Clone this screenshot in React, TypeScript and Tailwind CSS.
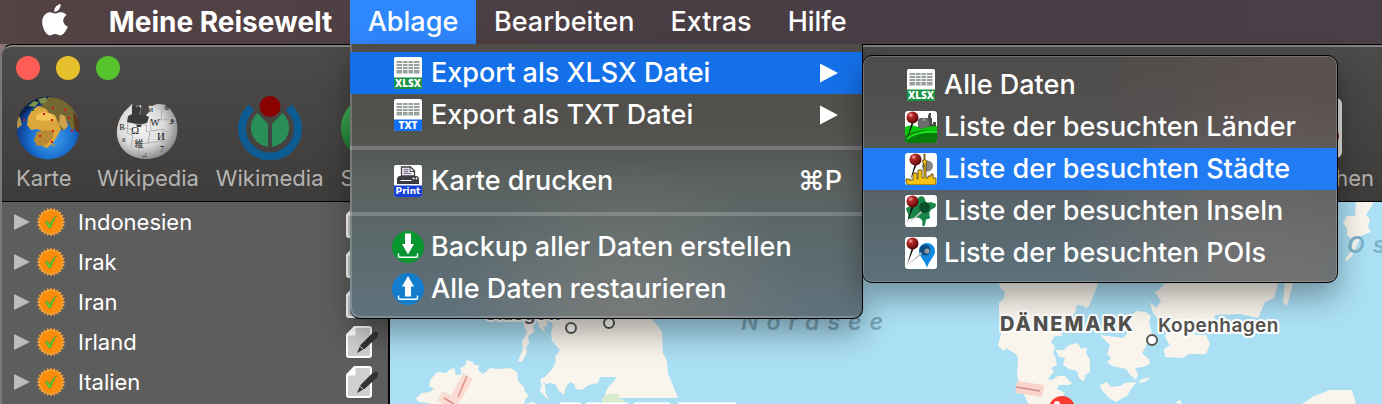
/**
 * Meine Reisewelt
 *
 * Menu bar with the opened "Ablage" menu above the main travel window.
 */

import React from 'react';

type MenuEntry = {
  label: string;
  icon: React.ReactNode;
  shortcut?: string;
  submenu?: boolean;
  active?: boolean;
};

const countries = ['Indonesien', 'Irak', 'Iran', 'Irland', 'Italien'];

/* ---------- Icons ---------- */

function AppleLogo() {
  return (
    <svg viewBox="0 0 26 32" className="h-8 w-[26px]" fill="#fff" aria-hidden="true">
      <path d="M18.6 0c.3 2.200-.6 4.200-1.900 5.700-1.200 1.400-2.900 2.300-4.400 2.100-.3-2 .7-4.100 1.900-5.500C15.400 1 17.200.2 18.600 0z" />
      <path d="M13.200 9.600c1.200 0 3-1.500 5.600-1.400 2.500.1 4.500 1.200 5.700 3-4.800 3-4.200 9.200 1.300 11.400-1 3-4.200 8.700-7.300 8.800-2 0-2.900-1.300-5.300-1.300s-3.400 1.300-5.300 1.300C4.500 31.300.3 24.800.2 18.300.1 12.300 4 8.500 7.900 8.300c2.300 0 4 1.300 5.300 1.300z" />
    </svg>
  );
}

function SheetIcon({ label, color }: { label: string; color: string }) {
  return (
    <svg viewBox="0 0 32 32" className="size-8" aria-hidden="true">
      <rect x="2" y="0" width="28" height="32" rx="2" fill="#fff" />
      <rect x="4.500" y="4" width="23" height="12.500" fill="#9aa09d" />
      <path d="M4 6.500h24M4 9.500h24M4 12.500h24M10.500 3v14M16 3v14M21.500 3v14" stroke="#f4f4f4" strokeWidth="1" />
      <path d="M2 20.500h28V30a2 2 0 0 1-2 2H4a2 2 0 0 1-2-2z" fill={color} />
      <text x="16" y="29.500" textAnchor="middle" fontFamily="Open Sans, sans-serif" fontWeight="800" fontSize="10" fill="#fff">
        {label}
      </text>
    </svg>
  );
}

function PrintIcon() {
  return (
    <svg viewBox="0 0 32 32" className="size-8" aria-hidden="true">
      <rect x="2" y="0" width="28" height="32" rx="2" fill="#fff" />
      <path d="M5 19v-5c0-2 1.500-3 3-3h16c2 0 3 1.500 3 3v5z" fill="#3c3b40" />
      <path d="M9.500 11V2h9l4 4v5z" fill="#fff" stroke="#3c3b40" strokeWidth="1.300" />
      <path d="M18 2v4.500h4.500" fill="none" stroke="#3c3b40" />
      <path d="M11.500 4.500h5M11.500 6.500h5M11.500 8.500h8" stroke="#8b7ca0" strokeWidth="1.300" />
      <path d="M8.500 15.500h11" stroke="#fff" strokeWidth="1" />
      <circle cx="21.500" cy="13.500" r="1" fill="#fff" />
      <circle cx="24.500" cy="13.500" r="1" fill="#fff" />
      <path d="M2 20.500h28V30a2 2 0 0 1-2 2H4a2 2 0 0 1-2-2z" fill="#1540d8" />
      <text x="16" y="29" textAnchor="middle" fontFamily="DejaVu Sans, sans-serif" fontWeight="700" fontSize="9" fill="#fff">
        Print
      </text>
    </svg>
  );
}

function TransferIcon({ up = false }: { up?: boolean }) {
  return (
    <svg viewBox="0 0 32 32" className="size-8" aria-hidden="true">
      <circle cx="16" cy="16" r="16" fill={up ? '#137dcd' : '#07962f'} />
      {up ? (
        <path d="M16 3l6 10.500h-3V23.500h-6V13.500h-3z" fill="#fff" />
      ) : (
        <path d="M13 2.500h6V13h3l-6 10.500L10 13h3z" fill="#fff" />
      )}
      <path d="M6.500 22.500v2.800a1 1 0 0 0 1 1h17a1 1 0 0 0 1-1v-2.800" fill="none" stroke="#fff" strokeWidth="1.500" />
    </svg>
  );
}

function Pin({ x = 7.5 }: { x?: number }) {
  return (
    <g>
      <path d={`M${x + 1} 12L${x - 5.5} 28L${x - 1} 12z`} fill="#111" />
      <circle cx={x} cy="6.500" r="6" fill="url(#pinShine)" />
    </g>
  );
}

function PinTile({ kind }: { kind: 'land' | 'city' | 'island' | 'poi' }) {
  return (
    <svg viewBox="0 0 32 32" className="size-8 rounded-[3px] bg-white" aria-hidden="true">
      <defs>
        <radialGradient id="pinShine" cx="0.35" cy="0.3" r="0.7">
          <stop offset="0" stopColor="#f3b0ac" />
          <stop offset="0.3" stopColor="#b52a26" />
          <stop offset="1" stopColor="#5c0709" />
        </radialGradient>
      </defs>
      {kind === 'land' && (
        <>
          <path d="M13 18V9l2-2h3v3h2V7h3V5l1-3h2v5h1v6h1v-2h3v9H13z" fill="#4b4b4d" />
          <circle cx="18.500" cy="12.500" r="6" fill="#777" opacity="0.75" />
          <path d="M0 16c7-3 12-1 16 2 5-2 10-3 16-3v17H0z" fill="#09c60a" />
          <path d="M0 25c9-6 19-6 32-5v12H0z" fill="#087c08" />
          <path d="M2 28c8-7 18-8 30-7" fill="none" stroke="#19e41b" strokeWidth="2" />
          <Pin />
        </>
      )}
      {kind === 'city' && (
        <>
          <circle cx="22.500" cy="13" r="5.500" fill="#858585" />
          <path
            d="M1 26h3v1h4v-7h4v6h1v-9h4v8h2V11l-2-3 2-1V1h1v6l2 1-1 3v14h2v-2h3v-2h2v4h3v6l-2 1H3l-2-3z"
            fill="#f8c414"
            stroke="#473705"
            strokeWidth="0.8"
          />
          <Pin x={10.5} />
        </>
      )}
      {kind === 'island' && (
        <>
          <path d="M1 13l5-2 7-8c2-3 7-2 7 2 1 3 3 3 6 2l5 2c0 3-1 4-4 5-3 2-3 5-2 8 0 3-3 1-4 3-1 4-1 7-3 6-2 0 1-4-2-7-3-2-7-2-11 0-4 1 0-5-3-7z" fill="#178648" />
          <circle cx="19.500" cy="12.500" r="5.500" fill="#0b4f2a" />
          <path d="M2 29l14-13 1 2z" fill="#bbb" />
          <Pin />
        </>
      )}
      {kind === 'poi' && (
        <>
          <path d="M22 31c-2-8-8-11-8-17a8 8 0 0 1 16 0c0 6-6 9-8 17z" fill="#118ae4" />
          <circle cx="20" cy="13" r="5.500" fill="#0d4f83" />
          <circle cx="22" cy="14" r="2.500" fill="#9a9a9a" />
          <path d="M2 29l14-14 1 2z" fill="#bbb" />
          <Pin />
        </>
      )}
    </svg>
  );
}

function GlobeIcon() {
  const dots = [
    [36, 11], [27, 17], [35, 23], [48, 13], [52, 21], [7, 23], [36, 34], [23, 39], [35, 45], [55, 34], [16, 13],
  ];
  return (
    <svg viewBox="0 0 64 64" className="size-16" aria-hidden="true">
      <defs>
        <radialGradient id="sea" cx="0.55" cy="0.65" r="0.6">
          <stop offset="0" stopColor="#45a5ee" />
          <stop offset="0.55" stopColor="#1a70cf" />
          <stop offset="0.9" stopColor="#0e3c92" />
          <stop offset="1" stopColor="#0a2048" />
        </radialGradient>
        <clipPath id="globeClip">
          <circle cx="32" cy="32" r="31.500" />
        </clipPath>
      </defs>
      <circle cx="32" cy="32" r="31.500" fill="url(#sea)" />
      <g clipPath="url(#globeClip)">
        <path d="M16 14l6-4 7 1 5 3 6 1 3 5 2 6 4 1-4 6-3 6-5 8-6 5-5-2 1-8-1-7-5-2-6 1-4-5 1-8z" fill="#dba63b" />
        <path d="M21 36l8-2 9 1-1 7-7 7-9 1-3-6z" fill="#b98935" />
        <path d="M27 5l6-4 12 1 10 8 7 10-2 12-4 2-4-8-4-2 2 8-4 3-4-9-3-7-6-2-3-4-5-2z" fill="#74672f" />
        <path d="M44 18l5 2 3 10-4 4-5-6z" fill="#cfa250" />
        <path d="M12 10l6-5 5 1-4 5zM22 3l8-2 1 5-6 2z" fill="#77904b" />
        <path d="M57 16l7 8v14l-5-4z" fill="#5a3520" />
        <path d="M20 19l7-3 9 2 4 5-9 2-11-1z" fill="#f0c456" />
        <path d="M0 19l4 2 2 8-5 4zM35 48l5 1-2 2z" fill="#a8934c" />
      </g>
      {dots.map(([x, y], i) => (
        <rect key={i} x={x} y={y} width="2" height="2" fill={i === 10 ? '#166b24' : '#d8151b'} />
      ))}
    </svg>
  );
}

function PuzzleGlobeIcon() {
  return (
    <svg viewBox="0 0 64 64" className="size-16" aria-hidden="true">
      <defs>
        <radialGradient id="paper" cx="0.4" cy="0.4" r="0.62">
          <stop offset="0" stopColor="#f7f7f7" />
          <stop offset="0.6" stopColor="#dcdcdc" />
          <stop offset="1" stopColor="#8d8d8d" />
        </radialGradient>
      </defs>
      <path
        d="M8 16l8-8c2 3 3 4 5 2 3-2 5-1 4 2-1 3 0 5-2 7l7 1c1-3 4-3 3-6-1-4 0-5 3-4l5-2c7 0 11 1 14 6 14 18 5 48-24 49C2 63-7 36 8 16z"
        fill="url(#paper)"
      />
      <path d="M16 9l5 2 2-2 2 4-2 6 6 0 4 2-2 6-5 1-1 3-4 0-1-3-9-2 1-6 4-2z" fill="#3a3a3a" />
      <path
        d="M4 33c5-3 8 2 14-1M12 26l-1 11 6 3-2 11M18 28l13 1-1 6 4 1-2 11-9 1-1 10M34 24l1 11 12-2 4 3M46 12l-1 12-10 1M47 33l-1 12-14 2M46 45l9 1M46 24l14-2"
        fill="none"
        stroke="#aaa"
        strokeWidth="0.9"
      />
      <g fill="#222" fontFamily="Liberation Serif, serif" fontSize="11" textAnchor="middle">
        <text x="19" y="38">Ω</text>
        <text x="39" y="30" fontSize="10">W</text>
        <text x="45" y="44">И</text>
        <text x="46" y="56" fontSize="9">7</text>
        <text x="35" y="16" fontSize="8">и</text>
        <text x="51" y="14" fontSize="7">⊕</text>
        <text x="56" y="26" fontSize="9">و</text>
        <text x="23" y="51" fontSize="9" fontFamily="Noto Sans CJK JP, sans-serif">維</text>
        <text x="6" y="34" fontSize="8">B</text>
        <text x="8" y="46" fontSize="6">R</text>
        <text x="28" y="61" fontSize="7">ය</text>
      </g>
    </svg>
  );
}

function WikimediaIcon() {
  return (
    <svg viewBox="0 0 64 64" className="size-16" aria-hidden="true">
      <path d="M13.500 11.500a28 28 0 1 0 37 0" fill="none" stroke="#0c5b93" strokeWidth="8" />
      <circle cx="32" cy="10.500" r="10.500" fill="#8b0000" />
      <path d="M19.500 17L30 28v23A19.500 19.500 0 0 1 19.500 17z" fill="#2a8e57" />
      <path d="M44.500 17L34 28v23A19.500 19.500 0 0 0 44.500 17z" fill="#2a8e57" />
    </svg>
  );
}

function BadgeIcon() {
  const teeth = 24;
  const points = Array.from({ length: teeth * 2 }, (_, i) => {
    const angle = (Math.PI * i) / teeth;
    const radius = i % 2 ? 12 : 14.5;
    return `${15 + radius * Math.sin(angle)},${15 - radius * Math.cos(angle)}`;
  }).join(' ');
  return (
    <svg viewBox="0 0 30 30" className="size-[30px]" aria-hidden="true">
      <polygon points={points} fill="#f9a233" />
      <circle cx="15" cy="15" r="11" fill="#fb8c0c" />
      <path d="M9.500 15l2-1 2.500 4c1-4 3-6.500 6.500-9-3 4-4 7.500-6 12h-1.500z" fill="#63d13c" stroke="#3d9b23" strokeWidth="0.6" />
    </svg>
  );
}

function EditIcon() {
  return (
    <svg viewBox="0 0 32 32" className="size-8" aria-hidden="true">
      <path d="M8.500 1H23a2 2 0 0 1 2 2v26a2 2 0 0 1-2 2H3a2 2 0 0 1-2-2V9z" fill="#cfcfcf" stroke="#fff" strokeWidth="2" />
      <path d="M9.500 1v8.500H1z" fill="#fff" />
      <path d="M11 27l3.500-8L26 7.500c2-2 4.500-2 5.500-1 1 1 1 3.500-1 5.500L19 22.500z" fill="#333" />
      <path d="M13 19.500l5.500 5" stroke="#cfcfcf" strokeWidth="1" />
    </svg>
  );
}

/* ---------- Menus ---------- */

const exportEntries: MenuEntry[] = [
  { label: 'Alle Daten', icon: <SheetIcon label="XLSX" color="#179242" /> },
  { label: 'Liste der besuchten Länder', icon: <PinTile kind="land" /> },
  { label: 'Liste der besuchten Städte', icon: <PinTile kind="city" />, active: true },
  { label: 'Liste der besuchten Inseln', icon: <PinTile kind="island" /> },
  { label: 'Liste der besuchten POIs', icon: <PinTile kind="poi" /> },
];

function MenuItem({ label, icon, shortcut, submenu, active }: MenuEntry) {
  return (
    <button
      type="button"
      role="menuitem"
      className={`flex h-[42px] w-full items-center gap-[7px] pr-5 pl-[42px] text-left text-[27px] leading-8 font-medium text-white ${
        active ? (submenu ? 'bg-[#1470e8]' : 'bg-[#217cf4]') : ''
      }`}
    >
      {icon}
      <span className="grow whitespace-nowrap">{label}</span>
      {shortcut && <span>{shortcut}</span>}
      {submenu && (
        <svg viewBox="0 0 18 20" className="mr-1 h-5 w-[18px]" aria-hidden="true">
          <path d="M0 0.500l18 9.500-18 9.500z" fill="#fff" />
        </svg>
      )}
    </button>
  );
}

function Separator() {
  return <div role="separator" className="my-2.5 h-1 bg-white/20" />;
}

function ExportSubmenu() {
  return (
    <div
      role="menu"
      aria-label="Export als XLSX Datei"
      className="absolute top-[3px] left-full w-[476px] rounded-[10px] border border-black bg-[#5b6164] bg-[radial-gradient(circle_at_85%_110%,#777270_0%,#77727000_45%),radial-gradient(circle_at_92%_15%,#5c5150_0%,#5c515000_40%),linear-gradient(to_bottom,#4e4c4a_0%,#535150_28%,#586266_60%,#5b717b_100%)] py-2 shadow-[0_14px_30px_rgba(0,0,0,0.35),inset_0_0_0_1px_rgba(255,255,255,0.2)]"
    >
      {exportEntries.map((entry) => (
        <MenuItem key={entry.label} {...entry} />
      ))}
    </div>
  );
}

function AblageMenu() {
  return (
    <div
      role="menu"
      aria-label="Ablage"
      className="absolute top-full left-0 z-10 w-[513px] rounded-b-[10px] border-r border-b border-black bg-[#5a6261] bg-[radial-gradient(circle_at_55%_110%,#7b7b76_0%,#7b7b7600_45%),linear-gradient(to_bottom,#504d49_0%,#52514d_30%,#5a615f_50%,#5c6a6d_75%,#5f727d_100%)] py-2 shadow-[0_14px_30px_rgba(0,0,0,0.35),inset_1px_-1px_0_1px_rgba(255,255,255,0.2)]"
    >
      <div className="relative">
        <MenuItem label="Export als XLSX Datei" icon={<SheetIcon label="XLSX" color="#179242" />} submenu active />
        <ExportSubmenu />
      </div>
      <MenuItem label="Export als TXT Datei" icon={<SheetIcon label="TXT" color="#116ef5" />} submenu />
      <Separator />
      <MenuItem label="Karte drucken" icon={<PrintIcon />} shortcut="⌘P" />
      <Separator />
      <MenuItem label="Backup aller Daten erstellen" icon={<TransferIcon />} />
      <MenuItem label="Alle Daten restaurieren" icon={<TransferIcon up />} />
    </div>
  );
}

function MenuBar() {
  return (
    <nav className="flex h-11 shrink-0 items-center bg-linear-to-r from-[#544244] via-[#493e44] to-[#4a3f47] text-[27px] leading-8 font-medium whitespace-nowrap text-white">
      <button type="button" aria-label="Apple" className="flex w-[91px] justify-center pb-1 pl-[19px]">
        <AppleLogo />
      </button>
      <button type="button" className="h-11 w-[259px] text-center text-[28px] font-bold">Meine Reisewelt</button>
      <div className="relative">
        <button type="button" aria-expanded="true" className="h-11 w-[126px] bg-[#2f87fd] text-center">Ablage</button>
        <AblageMenu />
      </div>
      <button type="button" className="h-11 px-[18px]">Bearbeiten</button>
      <button type="button" className="h-11 px-[18px]">Extras</button>
      <button type="button" className="h-11 px-[18px]">Hilfe</button>
    </nav>
  );
}

/* ---------- Window ---------- */

function ToolbarButton({ label, children }: { label: string; children: React.ReactNode }) {
  return (
    <button type="button" className="flex min-w-14 flex-col items-center gap-1 text-[22px] leading-7 text-[#b4b3b1]">
      {children}
      <span>{label}</span>
    </button>
  );
}

function Toolbar() {
  return (
    <header className="h-[157px] shrink-0 rounded-tl-[10px] border-t-2 border-b border-t-[#828180] border-b-black bg-linear-to-b from-[#4c4b49] to-[#3d3c3a]">
      <div className="flex gap-4 px-3.5 pt-[9px]">
        <button type="button" aria-label="Schließen" className="size-6 rounded-full bg-[#ff5c55]" />
        <button type="button" aria-label="Minimieren" className="size-6 rounded-full bg-[#e6bf2c]" />
        <button type="button" aria-label="Zoomen" className="size-6 rounded-full bg-[#56c32d]" />
      </div>
      <div className="flex justify-between pt-4 pr-2 pl-3.5">
        <div className="flex gap-[17px]">
          <button type="button" className="flex flex-col items-start gap-1 text-[22px] leading-7 text-[#b4b3b1]">
            <GlobeIcon />
            <span>Karte</span>
          </button>
          <ToolbarButton label="Wikipedia"><PuzzleGlobeIcon /></ToolbarButton>
          <ToolbarButton label="Wikimedia"><WikimediaIcon /></ToolbarButton>
          <button type="button" className="flex flex-col gap-1 text-left text-[22px] leading-7 text-[#b4b3b1]">
            <span className="size-16 rounded-full bg-linear-to-b from-[#4cc25f] to-[#126f2a]" />
            <span>S</span>
          </button>
        </div>
        <button type="button" className="flex flex-col items-end gap-1 text-[22px] leading-7 text-[#b4b3b1]">
          <svg viewBox="0 0 64 64" className="mr-8 size-16" aria-hidden="true">
            <rect x="0" y="2" width="64" height="60" rx="6" fill="#dededc" />
            <circle cx="51" cy="40" r="10" fill="#8c1210" />
          </svg>
          <span>hen</span>
        </button>
      </div>
    </header>
  );
}

function Sidebar() {
  return (
    <aside className="w-[388px] shrink-0 border-r-2 border-black bg-[#5d5d5d]">
      <ul>
        {countries.map((country) => (
          <li key={country} className="flex h-10 items-center pr-2.5 pl-3 text-[22px] leading-7 text-white">
            <button type="button" aria-label={`${country} aufklappen`} className="mr-1.5">
              <svg viewBox="0 0 16 16" className="size-4" aria-hidden="true">
                <path d="M0 0l16 8-16 8z" fill="#bcbcbc" />
              </svg>
            </button>
            <BadgeIcon />
            <span className="ml-3 grow">{country}</span>
            <button type="button" aria-label={`${country} bearbeiten`}>
              <EditIcon />
            </button>
          </li>
        ))}
      </ul>
    </aside>
  );
}

function TravelMap() {
  return (
    <svg
      viewBox="390 202 992 202"
      preserveAspectRatio="xMinYMin slice"
      className="min-w-0 flex-1 bg-[#abdff4]"
      role="img"
      aria-label="Karte"
    >
      {/* Land */}
      <g fill="#f9f5ed">
        <path d="M416 398l6-5 8-1 4-3-5-3 1-6 7-8 9 1 3-3 5-2 2 7 6-1-2-6 5-2 2-6 6 2 1 3 5 0-1 5 5 4 3-2 4-4 8 1 12-1 7 4 1 9 6 6 1 5 4 3-4 5-1 4 9-2 5 3H430l-2-2-10-1z" />
        <path d="M527 319l6 4 1 9-6 4 1 7-3 4 1 5-5 10-4-1 5-12-1-8 5-8-3-6zM536 319h12l-1 7-4 1 3 6-6-5z" />
        <path d="M550 319l3 6-2 9 1 7 8 9-5 7 1 4-3 7-8 9-5 2 5 6 1 8-5-8-1 6 9 10 1 5-2-8-6-12-2-6 6 4 4-1 5 1 4 7 5 4 2-8 4-5 4 2 2 5 6 1 7-5 9-2 2-6 17 0-4 5-4 4-3 5-2 7H678l-5-12-5-13-1-12-4-8-1-21-8-11-5-8-7-8-14-2z" />
        <path d="M999 283l1 5 5 4-1 6-5 5 0 11 7 10-5 10-3 12 6 5 2-3 10 6 2 5-1 17 6 17 6 12h39l1-5-6-4 2-3-8-4 2-4 10 0 3-2-7-7-7 0-6 4-4-1 6-8-3-3 6-3-2-9-2-2 2-7-4-5 4-6 8 0-2-3 4-14 10-6 2-8 8 1-1 3 5-3 8-19 1-6z" />
        <path d="M1056 350l8 0 5-5 9-2 3 6 6-2-1 6 4 7 0 12-5 3-1 7-5-4-2-7-8-2-6-4 2-7-6-1z" />
        <path d="M1100 335l23 3 4-4 0-9-4-10 8 1 5-5 10 1 5 4-2 6 3 12-5 5-1 7-4 7 7 6 1 5-7 3-8 1 3 6-2 6-6-5-4-6-14-3-5-4 4-4-4-4 3-9z" />
        <path d="M1100 385l7-3 4 5 9-1 5-3 12-1-7 8-2 5-12 7-7-4-8-9zM1138 383l4-4 9-2-6 5z" />
        <path d="M1165 283l-4 5-6 4 6 9-5 7-6-6 3 11 8 9 6 9-2 7 5 7-6 4 1 8 18 1 6-4 17 0 4-10-4-9-12 0 10-14 10 0 1-6 25-1 18 4 7-16 9-4 4-15z" />
        <path d="M1285 283h8l-6 23-4-4zM1302 404l12-8 16-6 22 0 4 14zM1175 403l5-3 2 4z" />
        <path d="M1356 202h18l-8 13 4 4-2 8 3 5-10 4-9 20-6 6-1-3 6-7 2-12-6-5 0-6-4-6 4-7 8 0z" />
      </g>
      <path d="M602 399l4-4 7-2 6 1 0 4 6 3-1 3h-22z" fill="#d8ebcf" />
      {/* Borders */}
      <g fill="none" strokeLinecap="butt">
        <path d="M468 376l-12 22M440 396l18 8" stroke="#fbdcd5" strokeWidth="11" />
        <path d="M467 376l-9 21M444 398l10 6" stroke="#dc8f84" strokeWidth="1.500" />
        <path d="M1016 387l27 4" stroke="#f9d3cc" strokeWidth="12" />
        <path d="M1016 387l24 4" stroke="#cf8f87" strokeWidth="1.500" />
      </g>
      <path d="M560 403.500h21M586 403.500h42M634 403.500h36M678 403.500h58" stroke="#fff" strokeWidth="2" />
      {/* Places */}
      <g fill="#fff" stroke="#585650" strokeWidth="2">
        <circle cx="571" cy="328" r="5" />
        <circle cx="609" cy="323" r="5" />
        <circle cx="1152" cy="340" r="5" />
      </g>
      <circle cx="1062" cy="409" r="13" fill="#fb3a2f" />
      <circle cx="1057" cy="404" r="3" fill="#fff" />
      {/* Labels */}
      <g fontFamily="Inter, sans-serif">
        <text x="741" y="330" fontSize="23" fontStyle="italic" fontWeight="600" className="tracking-[8px]" fill="#7aa7bb">
          Nordsee
        </text>
        <text x="1347" y="253" fontSize="23" fontStyle="italic" fontWeight="600" className="tracking-[8px]" fill="#7fb3cb">
          Os
        </text>
        <g fill="#54524f" stroke="#fff" strokeWidth="4" strokeLinejoin="round" paintOrder="stroke">
          <text x="483" y="320" fontSize="19" fontWeight="600">Glasgow</text>
          <text x="1000" y="331" fontSize="20" fontWeight="800" className="tracking-widest">DÄNEMARK</text>
          <text x="1158" y="332" fontSize="19" fontWeight="600" className="tracking-wide">Kopenhagen</text>
        </g>
      </g>
    </svg>
  );
}

export default function App() {
  return (
    <div className="flex h-screen flex-col overflow-hidden bg-[#8d7476] font-['Inter','Noto_Sans_CJK_JP',sans-serif]">
      <MenuBar />
      <main className="flex min-h-0 grow flex-col overflow-hidden rounded-tl-[12px] border-t border-l-2 border-t-black border-l-[#7a7a79] bg-[#3d3c3a]">
        <Toolbar />
        <div className="flex min-h-0 grow">
          <Sidebar />
          <TravelMap />
        </div>
      </main>
    </div>
  );
}
